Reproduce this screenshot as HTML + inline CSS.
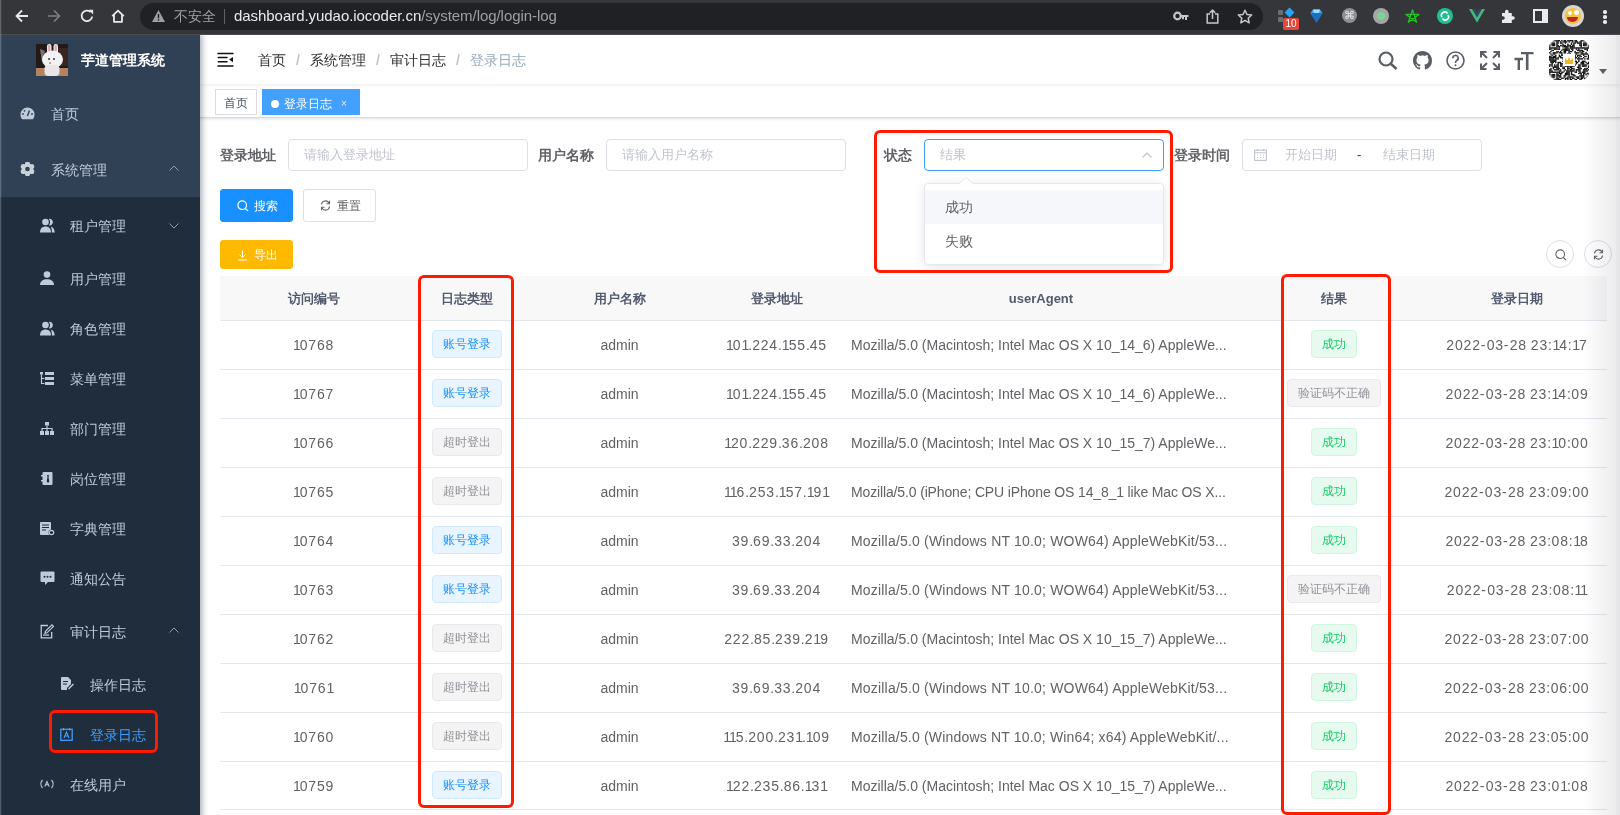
<!DOCTYPE html>
<html><head><meta charset="utf-8"><title>登录日志</title>
<style>
*{box-sizing:border-box;margin:0;padding:0}
html,body{width:1620px;height:815px;overflow:hidden}
body{position:relative;font-family:"Liberation Sans",sans-serif;background:#fff;color:#606266}
.a{position:absolute}
/* chrome */
#chrome{position:absolute;left:0;top:0;width:1620px;height:35px;background:#35363a;border-bottom:1px solid #4a4b4f;z-index:4}
#omni{position:absolute;left:140px;top:3px;width:1123px;height:27px;border-radius:14px;background:#202124}
.url{position:absolute;left:234px;top:7px;font-size:15px;line-height:18px;color:#e8eaed;white-space:nowrap;letter-spacing:-0.05px}
.url span{color:#9aa0a6}
.insecure{position:absolute;left:174px;top:7px;font-size:14px;line-height:18px;color:#9aa0a6}
.sep{position:absolute;left:224px;top:9px;width:1px;height:15px;background:#5f6368}
/* sidebar */
#side{position:absolute;left:0;top:34px;width:200px;height:820px;background:#304156;box-shadow:2px 0 6px rgba(0,21,41,.35);z-index:2}
#sub{position:absolute;left:0;top:163px;width:200px;height:660px;background:#1f2d3d}
.title{position:absolute;left:81px;top:16px;font-size:14px;font-weight:bold;color:#fff;line-height:20px;white-space:nowrap}
.mi{position:absolute;left:0;width:200px;height:20px;font-size:14px;line-height:20px;color:#bfcbd9;white-space:nowrap}
.mi .t{position:absolute;top:0}
.mi svg{position:absolute}
.chev{position:absolute;left:169px;width:10px;height:6px}
/* main */
#nav{position:absolute;left:200px;top:34px;width:1420px;height:50px;background:#fff;box-shadow:0 1px 4px rgba(0,21,41,.08);z-index:1}
.bc{position:absolute;top:18px;font-size:14px;line-height:16px;color:#303133;white-space:nowrap}
.bcs{position:absolute;top:18px;font-size:14px;line-height:16px;color:#c0c4cc;font-weight:bold}
#tags{position:absolute;left:200px;top:84px;width:1420px;height:34px;background:#fff;border-bottom:1px solid #d8dce5;box-shadow:0 1px 3px 0 rgba(0,0,0,.12),0 0 3px 0 rgba(0,0,0,.04)}
.tab{position:absolute;top:5px;height:26px;line-height:26px;font-size:12px;border:1px solid #d8dce5;color:#495060;background:#fff;padding:0 8px;white-space:nowrap}
.tab.act{background:#42a0ff;border-color:#42a0ff;color:#fff}
.lbl{position:absolute;top:139px;height:32px;line-height:32px;font-size:14px;font-weight:bold;color:#606266;white-space:nowrap}
.inp{position:absolute;top:139px;height:32px;width:240px;border:1px solid #dcdfe6;border-radius:4px;background:#fff;font-size:13px;line-height:30px;color:#c0c4cc;white-space:nowrap}
.inp .ph{position:absolute;left:15px;top:0}
.btn{position:absolute;height:32px;width:73px;border-radius:3px;font-size:12px;line-height:30px;white-space:nowrap}
.thead{position:absolute;left:220px;top:276px;width:1387px;height:45px;background:#f8f8f9;border-bottom:1px solid #e3e8ee}
.th{position:absolute;top:276px;height:43px;line-height:45px;text-align:center;font-size:13px;font-weight:bold;color:#515a6e;white-space:nowrap}
.rowline{position:absolute;left:220px;width:1387px;height:1px;background:#e3e8ee}
.td{position:absolute;height:48px;line-height:50px;text-align:center;font-size:14px;color:#606266;white-space:nowrap}
.ua{text-align:left;padding-left:10px}
.tag{position:absolute;height:28px;line-height:26px;padding:0;text-align:center;font-size:12px;border:1px solid;border-radius:4px;white-space:nowrap}
.tp{background:#e8f4ff;border-color:#d1e9ff;color:#1890ff}
.ti{background:#f4f4f5;border-color:#e9e9eb;color:#909399}
.ts{background:#e7faf0;border-color:#d0f5e0;color:#13ce66}
.redbox{position:absolute;z-index:5;border:3px solid #ff1a00;border-radius:6px}



</style></head><body><div id="wrap" style="position:absolute;left:0;top:0;width:1620px;height:815px;overflow:hidden;will-change:transform">
<div id="chrome">
  <svg class="a" style="left:14px;top:8px" width="16" height="16" viewBox="0 0 16 16"><path d="M14 8H3M8 2.5L2.5 8 8 13.5" stroke="#e8eaed" stroke-width="1.8" fill="none"/></svg>
  <svg class="a" style="left:46px;top:8px" width="16" height="16" viewBox="0 0 16 16"><path d="M2 8h11M8 2.5L13.5 8 8 13.5" stroke="#7c7f84" stroke-width="1.6" fill="none"/></svg>
  <svg class="a" style="left:79px;top:8px" width="16" height="16" viewBox="0 0 16 16"><path d="M13.2 8.5A5.3 5.3 0 1 1 11.6 4" stroke="#e8eaed" stroke-width="1.8" fill="none"/><path d="M9.5 1.8h4.6v4.6z" fill="#e8eaed"/></svg>
  <svg class="a" style="left:110px;top:8px" width="16" height="16" viewBox="0 0 16 16"><path d="M2.2 8.2L8 2.6l5.8 5.6M4 7v6.8h8V7" stroke="#e8eaed" stroke-width="1.8" fill="none" stroke-linejoin="round"/></svg>
  <div id="omni"></div>
  <svg class="a" style="left:151px;top:9px" width="15" height="14" viewBox="0 0 15 14"><path d="M7.5 1L14 13H1z" fill="#9aa0a6"/><rect x="6.8" y="5" width="1.4" height="4.3" fill="#202124"/><rect x="6.8" y="10.2" width="1.4" height="1.4" fill="#202124"/></svg>
  <div class="insecure">不安全</div>
  <div class="sep"></div>
  <div class="url">dashboard.yudao.iocoder.cn<span>/system/log/login-log</span></div>
  <svg class="a" style="left:1173px;top:10px" width="16" height="12" viewBox="0 0 16 12"><circle cx="4.5" cy="6" r="3.3" stroke="#c4c7cc" stroke-width="2.2" fill="none"/><path d="M7.5 5h8v2h-1.5v3h-2v-3h-1v2.2h-2V7H7.5z" fill="#c4c7cc"/></svg>
  <svg class="a" style="left:1206px;top:9px" width="13" height="15" viewBox="0 0 13 15"><path d="M4 5H1.2v9h10.6V5H9M6.5 10V1.2M3.8 3.8L6.5 1.1 9.2 3.8" stroke="#c4c7cc" stroke-width="1.5" fill="none"/></svg>
  <svg class="a" style="left:1237px;top:9px" width="16" height="15" viewBox="0 0 16 15"><path d="M8 1.2l2 4.3 4.7.5-3.5 3.2 1 4.6L8 11.4l-4.2 2.4 1-4.6L1.3 6l4.7-.5z" stroke="#c4c7cc" stroke-width="1.5" fill="none" stroke-linejoin="round"/></svg>
  <!-- extensions -->
  <div class="a" style="left:1278px;top:10px;width:5px;height:5px;background:#6b6e73;border-radius:1px"></div>
  <div class="a" style="left:1278px;top:17px;width:5px;height:5px;background:#6b6e73;border-radius:1px"></div>
  <div class="a" style="left:1286px;top:9px;width:7px;height:7px;background:#1ea7fd;transform:rotate(45deg)"></div>
  <div class="a" style="left:1283px;top:18px;width:16px;height:12px;background:#e8453c;border-radius:2px;color:#fff;font-size:10px;line-height:12px;text-align:center">10</div>
  <svg class="a" style="left:1310px;top:9px" width="13" height="14" viewBox="0 0 13 14"><path d="M3 0.5h7l2.5 3.5L6.5 13.5 0.5 4z" fill="#3aa7f0"/><path d="M0.5 4h12L6.5 13.5z" fill="#1b6fc4"/><path d="M3 0.5h7l-1 3.5H4z" fill="#9be0ff"/></svg>
  <div class="a" style="left:1342px;top:8px;width:15px;height:15px;border-radius:50%;background:#8d8f93;color:#e8e8e8;font-size:11px;line-height:15px;text-align:center">⌘</div>
  <div class="a" style="left:1373px;top:8px;width:16px;height:16px;border-radius:50%;background:#a3a5a8"></div>
  <div class="a" style="left:1377px;top:12px;width:8px;height:8px;border-radius:50%;background:#7fd28c"></div>
  <svg class="a" style="left:1405px;top:9px" width="15" height="15" viewBox="0 0 15 15"><path d="M7.5 0.8L11.6 13.2 0.9 5.4H14.1L3.4 13.2Z" stroke="#1ec31e" stroke-width="1.3" fill="none" stroke-linejoin="round"/></svg>
  <div class="a" style="left:1437px;top:8px;width:16px;height:16px;border-radius:50%;background:#1fbf8f"></div>
  <svg class="a" style="left:1440px;top:11px" width="10" height="10" viewBox="0 0 10 10"><path d="M2 6A3 3 0 0 1 7.5 2.5M8 4A3 3 0 0 1 2.5 7.5" stroke="#fff" stroke-width="1.6" fill="none"/></svg>
  <svg class="a" style="left:1469px;top:9px" width="16" height="14" viewBox="0 0 16 14"><path d="M0 0h3.2L8 8.3 12.8 0H16L8 13.8z" fill="#41b883"/><path d="M3.2 0h2.9L8 3.3 9.9 0h2.9L8 8.3z" fill="#35495e"/></svg>
  <svg class="a" style="left:1501px;top:9px" width="15" height="14" viewBox="0 0 15 14"><path d="M1 4h3V2.5a1.8 1.8 0 0 1 3.6 0V4h3.2v3.2h1.2a1.8 1.8 0 0 1 0 3.6h-1.2V14H1v-3.2h1a1.8 1.8 0 0 0 0-3.6H1z" fill="#e8eaed"/></svg>
  <svg class="a" style="left:1533px;top:9px" width="15" height="14" viewBox="0 0 15 14"><rect x="1" y="1" width="13" height="12" stroke="#e8eaed" stroke-width="2" fill="none"/><rect x="9" y="1" width="5" height="12" fill="#e8eaed"/></svg>
  <div class="a" style="left:1562px;top:5px;width:22px;height:22px;border-radius:50%;background:#d6d6d6"></div>
  <div class="a" style="left:1565px;top:8px;width:16px;height:16px;border-radius:50%;background:#f6c33b"></div>
  <div class="a" style="left:1567px;top:17px;width:11px;height:5px;border-radius:0 0 6px 6px;background:#c0262d"></div><div class="a" style="left:1568px;top:11px;width:4px;height:4px;border-radius:50%;background:#fff"></div><div class="a" style="left:1574px;top:10px;width:5px;height:5px;border-radius:50%;background:#fff"></div>
  <div class="a" style="left:1603px;top:10px;width:3.5px;height:3.5px;border-radius:50%;background:#e8eaed"></div>
  <div class="a" style="left:1603px;top:15px;width:3.5px;height:3.5px;border-radius:50%;background:#e8eaed"></div>
  <div class="a" style="left:1603px;top:20px;width:3.5px;height:3.5px;border-radius:50%;background:#e8eaed"></div>
</div>

<div id="side">
  <div id="sub"></div>
  <!-- logo -->
  <svg class="a" style="left:36px;top:10px" width="32" height="32" viewBox="0 0 32 32"><rect width="32" height="32" fill="#231a18"/><rect x="22" y="4" width="10" height="18" fill="#3a2620"/><path d="M4 5l5 2-2 5 3 4-4 2z" fill="#7b7472"/><rect y="24" width="32" height="8" fill="#b4835f"/><rect x="11" y="0" width="4.5" height="10" rx="2" fill="#eceaea"/><rect x="12.2" y="1" width="2" height="7" fill="#e7a1b1"/><rect x="17.5" y="0" width="4.5" height="10" rx="2" fill="#eceaea"/><rect x="18.7" y="1" width="2" height="7" fill="#e7a1b1"/><ellipse cx="16.5" cy="15.5" rx="10.5" ry="9" fill="#f2f2f4"/><rect x="8.5" y="21" width="15" height="11" rx="4" fill="#e9e5e8"/><circle cx="13" cy="15" r="1.1" fill="#3b4a66"/><circle cx="18" cy="15" r="1.1" fill="#3b4a66"/><circle cx="14" cy="19" r="0.9" fill="#c8764a"/></svg>
  <div class="title">芋道管理系统</div>

  <div class="mi" style="top:70px"><svg style="left:20px;top:3px" width="15" height="13" viewBox="0 0 15 13"><path d="M7.5 0.5A7 7 0 0 0 0.5 7.5c0 1.8.6 3.5 1.6 4.8h10.8a7 7 0 0 0 1.6-4.8A7 7 0 0 0 7.5 0.5z" fill="#bfcbd9"/><path d="M7.5 9L9.5 3.5" stroke="#304156" stroke-width="1.4"/><circle cx="3" cy="7" r="0.9" fill="#304156"/><circle cx="4.5" cy="3.8" r="0.9" fill="#304156"/><circle cx="12" cy="7" r="0.9" fill="#304156"/></svg><span class="t" style="left:51px">首页</span></div>
  <div class="mi" style="top:126px"><svg style="left:20px;top:2px" width="15" height="14" viewBox="0 0 15 14"><g fill="#c9d0d8"><circle cx="7.5" cy="7" r="5"/><circle cx="11.66" cy="9.40" r="2.6"/><circle cx="7.50" cy="11.80" r="2.6"/><circle cx="3.34" cy="9.40" r="2.6"/><circle cx="3.34" cy="4.60" r="2.6"/><circle cx="7.50" cy="2.20" r="2.6"/><circle cx="11.66" cy="4.60" r="2.6"/></g><circle cx="7.5" cy="7" r="2.3" fill="#304156"/></svg><span class="t" style="left:51px">系统管理</span><svg class="chev" style="top:5px" viewBox="0 0 10 6"><path d="M0.5 5.5L5 1l4.5 4.5" stroke="#909aa8" stroke-width="1" fill="none"/></svg></div>

  <div class="mi" style="top:182px"><svg style="left:40px;top:2px" width="15" height="15" viewBox="0 0 15 15"><path d="M8.8 0.9a3.3 3.3 0 1 1 0 6.4A4.6 4.6 0 0 0 8.8 0.9zM10.8 8.6c2.4.6 3.9 2.6 3.9 5.9h-2.8c0-2.6-.4-4.4-1.1-5.9z" fill="#bfcbd9"/><circle cx="5.5" cy="4" r="3.3" fill="#bfcbd9"/><path d="M0 14.5c0-4 2.2-6 5.5-6s5.5 2 5.5 6z" fill="#bfcbd9"/></svg><span class="t" style="left:70px">租户管理</span><svg class="chev" style="top:7px" viewBox="0 0 10 6"><path d="M0.5 0.5L5 5l4.5-4.5" stroke="#909aa8" stroke-width="1" fill="none"/></svg></div>
  <div class="mi" style="top:235px"><svg style="left:40px;top:2px" width="14" height="14" viewBox="0 0 14 14"><circle cx="7" cy="3.6" r="3.3" fill="#bfcbd9"/><path d="M0 14c0-4 3-5.8 7-5.8s7 1.8 7 5.8z" fill="#bfcbd9"/></svg><span class="t" style="left:70px">用户管理</span></div>
  <div class="mi" style="top:285px"><svg style="left:40px;top:2px" width="15" height="15" viewBox="0 0 15 15"><path d="M8.8 0.9a3.3 3.3 0 1 1 0 6.4A4.6 4.6 0 0 0 8.8 0.9zM10.8 8.6c2.4.6 3.9 2.6 3.9 5.9h-2.8c0-2.6-.4-4.4-1.1-5.9z" fill="#bfcbd9"/><circle cx="5.5" cy="4" r="3.3" fill="#bfcbd9"/><path d="M0 14.5c0-4 2.2-6 5.5-6s5.5 2 5.5 6z" fill="#bfcbd9"/></svg><span class="t" style="left:70px">角色管理</span></div>
  <div class="mi" style="top:335px"><svg style="left:40px;top:3px" width="14" height="14" viewBox="0 0 14 14"><rect x="0" y="0" width="3" height="2.5" fill="#bfcbd9"/><path d="M1.5 2.5v9h3M1.5 6.5h3" stroke="#bfcbd9" stroke-width="1.2" fill="none"/><rect x="5" y="0" width="9" height="3" fill="#bfcbd9"/><rect x="5" y="5" width="9" height="3" fill="#bfcbd9"/><rect x="5" y="10" width="9" height="3" fill="#bfcbd9"/></svg><span class="t" style="left:70px">菜单管理</span></div>
  <div class="mi" style="top:385px"><svg style="left:40px;top:3px" width="14" height="14" viewBox="0 0 14 14"><rect x="5" y="0" width="4" height="3.5" fill="#bfcbd9"/><path d="M7 3.5v3M2 9V6.5h10V9M7 6.5V9" stroke="#bfcbd9" stroke-width="1.2" fill="none"/><rect x="0" y="9" width="4" height="4" fill="#bfcbd9"/><rect x="5" y="9" width="4" height="4" fill="#bfcbd9"/><rect x="10" y="9" width="4" height="4" fill="#bfcbd9"/></svg><span class="t" style="left:70px">部门管理</span></div>
  <div class="mi" style="top:435px"><svg style="left:41px;top:3px" width="12" height="14" viewBox="0 0 12 14"><rect x="1.5" y="0" width="10" height="13" rx="1" fill="#bfcbd9"/><rect x="0" y="3" width="3" height="1.5" fill="#bfcbd9"/><rect x="0" y="8" width="3" height="1.5" fill="#bfcbd9"/><path d="M6 3h2l-.5 2 .8 4.5L7 11 5.7 9.5l.8-4.5z" fill="#1f2d3d"/></svg><span class="t" style="left:70px">岗位管理</span></div>
  <div class="mi" style="top:485px"><svg style="left:40px;top:3px" width="15" height="14" viewBox="0 0 15 14"><rect x="0" y="0" width="11" height="13" rx="1" fill="#bfcbd9"/><path d="M2 3h7M2 5.5h7M2 8h4" stroke="#1f2d3d" stroke-width="1"/><circle cx="11.5" cy="10.5" r="3" fill="#1f2d3d"/><circle cx="11.5" cy="10.5" r="2.2" stroke="#bfcbd9" stroke-width="1.2" fill="none"/></svg><span class="t" style="left:70px">字典管理</span></div>
  <div class="mi" style="top:535px"><svg style="left:40px;top:2px" width="15" height="15" viewBox="0 0 15 15"><path d="M1.5 0.5h12a1 1 0 0 1 1 1v8.5a1 1 0 0 1-1 1H8l-3 3v-3H1.5a1 1 0 0 1-1-1V1.5a1 1 0 0 1 1-1z" fill="#bfcbd9"/><circle cx="4.5" cy="5.8" r="1" fill="#1f2d3d"/><circle cx="7.5" cy="5.8" r="1" fill="#1f2d3d"/><circle cx="10.5" cy="5.8" r="1" fill="#1f2d3d"/></svg><span class="t" style="left:70px">通知公告</span></div>
  <div class="mi" style="top:588px"><svg style="left:40px;top:2px" width="14" height="15" viewBox="0 0 14 15"><path d="M8 1.5H1.2v12.3h10.5V8" stroke="#bfcbd9" stroke-width="1.3" fill="none"/><path d="M12 0.8l1.5 1.5-6.5 6.5-2 .5.5-2z" stroke="#bfcbd9" stroke-width="1.2" fill="none"/><path d="M3 11h6" stroke="#bfcbd9" stroke-width="1.2"/></svg><span class="t" style="left:70px">审计日志</span><svg class="chev" style="top:5px" viewBox="0 0 10 6"><path d="M0.5 5.5L5 1l4.5 4.5" stroke="#909aa8" stroke-width="1" fill="none"/></svg></div>
  <div class="mi" style="top:641px"><svg style="left:60px;top:2px" width="15" height="14" viewBox="0 0 15 14"><path d="M1 1a1 1 0 0 1 1-1h6l3 3v4l-4 4v2H2a1 1 0 0 1-1-1z" fill="#bfcbd9"/><path d="M3 4.5h5M3 7h4" stroke="#1f2d3d" stroke-width="1.2"/><path d="M8.5 12l5-5" stroke="#bfcbd9" stroke-width="1.5"/></svg><span class="t" style="left:90px">操作日志</span></div>
  <div class="mi" style="top:691px;color:#409eff"><svg style="left:60px;top:3px" width="13" height="13" viewBox="0 0 13 13"><rect x="0.8" y="1.3" width="11.4" height="11" stroke="#409eff" stroke-width="1.3" fill="none"/><path d="M3.5 0v2.5M9.5 0v2.5M4 10l2.5-6 2.5 6M4.8 8h3.4" stroke="#409eff" stroke-width="1.2" fill="none"/></svg><span class="t" style="left:90px">登录日志</span></div>
  <div class="mi" style="top:741px"><svg style="left:40px;top:4px" width="14" height="10" viewBox="0 0 14 10"><path d="M2.5 1A6 6 0 0 0 2.5 9M11.5 1a6 6 0 0 1 0 8" stroke="#bfcbd9" stroke-width="1.2" fill="none"/><path d="M4.8 7.5l2.2-5 2.2 5M5.6 5.8h2.8" stroke="#bfcbd9" stroke-width="1.1" fill="none"/></svg><span class="t" style="left:70px">在线用户</span></div>
</div>

<div id="nav">
  <svg class="a" style="left:17px;top:52px;top:18px" width="17" height="16" viewBox="0 0 17 16"><path d="M1 1.5h15M1.3 5.5h8.7M1.3 9.7h8.7M1 14h15" stroke="#111" stroke-width="1.5" stroke-linecap="round"/><path d="M12.2 7.6L16 5v5.2z" fill="#111"/></svg>
  <div class="bc" style="left:58px">首页</div>
  <div class="bcs" style="left:96px">/</div>
  <div class="bc" style="left:110px">系统管理</div>
  <div class="bcs" style="left:176px">/</div>
  <div class="bc" style="left:190px">审计日志</div>
  <div class="bcs" style="left:256px">/</div>
  <div class="bc" style="left:270px;color:#97a8be">登录日志</div>
  <svg class="a" style="left:1178px;top:17px" width="20" height="19" viewBox="0 0 20 19"><circle cx="8" cy="8" r="6.5" stroke="#5a5e66" stroke-width="2.2" fill="none"/><path d="M12.8 12.8L18.5 18" stroke="#5a5e66" stroke-width="2.6"/></svg>
  <svg class="a" style="left:1213px;top:17px" width="19" height="19" viewBox="0 0 16 16"><path fill="#5a5e66" d="M8 0C3.58 0 0 3.58 0 8c0 3.54 2.29 6.53 5.47 7.59.4.07.55-.17.55-.38 0-.19-.01-.82-.01-1.49-2.01.37-2.53-.49-2.69-.94-.09-.23-.48-.94-.82-1.13-.28-.15-.68-.52-.01-.53.63-.01 1.08.58 1.23.82.72 1.21 1.87.87 2.33.66.07-.52.28-.87.51-1.07-1.78-.2-3.64-.89-3.64-3.95 0-.87.31-1.59.82-2.15-.08-.2-.36-1.02.08-2.12 0 0 .67-.21 2.2.82.64-.18 1.32-.27 2-.27.68 0 1.36.09 2 .27 1.53-1.04 2.2-.82 2.2-.82.44 1.1.16 1.92.08 2.12.51.56.82 1.27.82 2.15 0 3.07-1.87 3.75-3.65 3.95.29.25.54.73.54 1.48 0 1.07-.01 1.93-.01 2.2 0 .21.15.46.55.38A8.013 8.013 0 0016 8c0-4.42-3.58-8-8-8z"/></svg>
  <svg class="a" style="left:1246px;top:17px" width="19" height="19" viewBox="0 0 19 19"><circle cx="9.5" cy="9.5" r="8.5" stroke="#5a5e66" stroke-width="1.6" fill="none"/><path d="M6.8 7.2a2.7 2.7 0 1 1 3.8 2.4c-.8.4-1.1.9-1.1 1.8v.6" stroke="#5a5e66" stroke-width="1.6" fill="none"/><circle cx="9.5" cy="14.3" r="1" fill="#5a5e66"/></svg>
  <svg class="a" style="left:1280px;top:17px" width="20" height="19" viewBox="0 0 20 19"><path d="M1 6.5V1h5.5M1 1l6 6M19 6.5V1h-5.5M19 1l-6 6M1 12.5V18h5.5M1 18l6-6M19 12.5V18h-5.5M19 18l-6-6" stroke="#5a5e66" stroke-width="2" fill="none"/></svg>
  <svg class="a" style="left:1314px;top:18px" width="20" height="18" viewBox="0 0 20 18"><path d="M7 1h12.5M13.2 1v17" stroke="#5a5e66" stroke-width="2.6"/><path d="M0.5 7h8.5M4.8 7v11" stroke="#5a5e66" stroke-width="2.4"/></svg>
  <div class="a" style="left:1349px;top:6px;width:40px;height:40px;border-radius:8px;overflow:hidden"><svg width="40" height="40" viewBox="0 0 40 40"><rect width="40" height="40" fill="#fff"/><g fill="#111"><rect x="0.00" y="0.00" width="1.41" height="1.41"/><rect x="1.21" y="0.00" width="1.41" height="1.41"/><rect x="2.42" y="0.00" width="1.41" height="1.41"/><rect x="3.64" y="0.00" width="1.41" height="1.41"/><rect x="4.85" y="0.00" width="1.41" height="1.41"/><rect x="6.06" y="0.00" width="1.41" height="1.41"/><rect x="7.27" y="0.00" width="1.41" height="1.41"/><rect x="8.48" y="0.00" width="1.41" height="1.41"/><rect x="9.70" y="0.00" width="1.41" height="1.41"/><rect x="12.12" y="0.00" width="1.41" height="1.41"/><rect x="14.55" y="0.00" width="1.41" height="1.41"/><rect x="15.76" y="0.00" width="1.41" height="1.41"/><rect x="18.18" y="0.00" width="1.41" height="1.41"/><rect x="19.39" y="0.00" width="1.41" height="1.41"/><rect x="20.61" y="0.00" width="1.41" height="1.41"/><rect x="21.82" y="0.00" width="1.41" height="1.41"/><rect x="23.03" y="0.00" width="1.41" height="1.41"/><rect x="25.45" y="0.00" width="1.41" height="1.41"/><rect x="26.67" y="0.00" width="1.41" height="1.41"/><rect x="31.52" y="0.00" width="1.41" height="1.41"/><rect x="32.73" y="0.00" width="1.41" height="1.41"/><rect x="33.94" y="0.00" width="1.41" height="1.41"/><rect x="35.15" y="0.00" width="1.41" height="1.41"/><rect x="36.36" y="0.00" width="1.41" height="1.41"/><rect x="37.58" y="0.00" width="1.41" height="1.41"/><rect x="38.79" y="0.00" width="1.41" height="1.41"/><rect x="0.00" y="1.21" width="1.41" height="1.41"/><rect x="7.27" y="1.21" width="1.41" height="1.41"/><rect x="8.48" y="1.21" width="1.41" height="1.41"/><rect x="10.91" y="1.21" width="1.41" height="1.41"/><rect x="13.33" y="1.21" width="1.41" height="1.41"/><rect x="14.55" y="1.21" width="1.41" height="1.41"/><rect x="15.76" y="1.21" width="1.41" height="1.41"/><rect x="16.97" y="1.21" width="1.41" height="1.41"/><rect x="19.39" y="1.21" width="1.41" height="1.41"/><rect x="23.03" y="1.21" width="1.41" height="1.41"/><rect x="25.45" y="1.21" width="1.41" height="1.41"/><rect x="26.67" y="1.21" width="1.41" height="1.41"/><rect x="27.88" y="1.21" width="1.41" height="1.41"/><rect x="30.30" y="1.21" width="1.41" height="1.41"/><rect x="31.52" y="1.21" width="1.41" height="1.41"/><rect x="38.79" y="1.21" width="1.41" height="1.41"/><rect x="0.00" y="2.42" width="1.41" height="1.41"/><rect x="2.42" y="2.42" width="1.41" height="1.41"/><rect x="3.64" y="2.42" width="1.41" height="1.41"/><rect x="4.85" y="2.42" width="1.41" height="1.41"/><rect x="7.27" y="2.42" width="1.41" height="1.41"/><rect x="8.48" y="2.42" width="1.41" height="1.41"/><rect x="10.91" y="2.42" width="1.41" height="1.41"/><rect x="12.12" y="2.42" width="1.41" height="1.41"/><rect x="15.76" y="2.42" width="1.41" height="1.41"/><rect x="21.82" y="2.42" width="1.41" height="1.41"/><rect x="24.24" y="2.42" width="1.41" height="1.41"/><rect x="25.45" y="2.42" width="1.41" height="1.41"/><rect x="27.88" y="2.42" width="1.41" height="1.41"/><rect x="29.09" y="2.42" width="1.41" height="1.41"/><rect x="30.30" y="2.42" width="1.41" height="1.41"/><rect x="31.52" y="2.42" width="1.41" height="1.41"/><rect x="33.94" y="2.42" width="1.41" height="1.41"/><rect x="35.15" y="2.42" width="1.41" height="1.41"/><rect x="36.36" y="2.42" width="1.41" height="1.41"/><rect x="38.79" y="2.42" width="1.41" height="1.41"/><rect x="0.00" y="3.64" width="1.41" height="1.41"/><rect x="2.42" y="3.64" width="1.41" height="1.41"/><rect x="3.64" y="3.64" width="1.41" height="1.41"/><rect x="4.85" y="3.64" width="1.41" height="1.41"/><rect x="7.27" y="3.64" width="1.41" height="1.41"/><rect x="13.33" y="3.64" width="1.41" height="1.41"/><rect x="18.18" y="3.64" width="1.41" height="1.41"/><rect x="21.82" y="3.64" width="1.41" height="1.41"/><rect x="24.24" y="3.64" width="1.41" height="1.41"/><rect x="30.30" y="3.64" width="1.41" height="1.41"/><rect x="31.52" y="3.64" width="1.41" height="1.41"/><rect x="33.94" y="3.64" width="1.41" height="1.41"/><rect x="35.15" y="3.64" width="1.41" height="1.41"/><rect x="36.36" y="3.64" width="1.41" height="1.41"/><rect x="38.79" y="3.64" width="1.41" height="1.41"/><rect x="0.00" y="4.85" width="1.41" height="1.41"/><rect x="2.42" y="4.85" width="1.41" height="1.41"/><rect x="3.64" y="4.85" width="1.41" height="1.41"/><rect x="4.85" y="4.85" width="1.41" height="1.41"/><rect x="7.27" y="4.85" width="1.41" height="1.41"/><rect x="8.48" y="4.85" width="1.41" height="1.41"/><rect x="10.91" y="4.85" width="1.41" height="1.41"/><rect x="12.12" y="4.85" width="1.41" height="1.41"/><rect x="13.33" y="4.85" width="1.41" height="1.41"/><rect x="14.55" y="4.85" width="1.41" height="1.41"/><rect x="15.76" y="4.85" width="1.41" height="1.41"/><rect x="18.18" y="4.85" width="1.41" height="1.41"/><rect x="19.39" y="4.85" width="1.41" height="1.41"/><rect x="20.61" y="4.85" width="1.41" height="1.41"/><rect x="23.03" y="4.85" width="1.41" height="1.41"/><rect x="24.24" y="4.85" width="1.41" height="1.41"/><rect x="30.30" y="4.85" width="1.41" height="1.41"/><rect x="31.52" y="4.85" width="1.41" height="1.41"/><rect x="33.94" y="4.85" width="1.41" height="1.41"/><rect x="35.15" y="4.85" width="1.41" height="1.41"/><rect x="36.36" y="4.85" width="1.41" height="1.41"/><rect x="38.79" y="4.85" width="1.41" height="1.41"/><rect x="0.00" y="6.06" width="1.41" height="1.41"/><rect x="7.27" y="6.06" width="1.41" height="1.41"/><rect x="8.48" y="6.06" width="1.41" height="1.41"/><rect x="9.70" y="6.06" width="1.41" height="1.41"/><rect x="13.33" y="6.06" width="1.41" height="1.41"/><rect x="14.55" y="6.06" width="1.41" height="1.41"/><rect x="15.76" y="6.06" width="1.41" height="1.41"/><rect x="16.97" y="6.06" width="1.41" height="1.41"/><rect x="18.18" y="6.06" width="1.41" height="1.41"/><rect x="20.61" y="6.06" width="1.41" height="1.41"/><rect x="21.82" y="6.06" width="1.41" height="1.41"/><rect x="23.03" y="6.06" width="1.41" height="1.41"/><rect x="24.24" y="6.06" width="1.41" height="1.41"/><rect x="31.52" y="6.06" width="1.41" height="1.41"/><rect x="38.79" y="6.06" width="1.41" height="1.41"/><rect x="0.00" y="7.27" width="1.41" height="1.41"/><rect x="1.21" y="7.27" width="1.41" height="1.41"/><rect x="2.42" y="7.27" width="1.41" height="1.41"/><rect x="3.64" y="7.27" width="1.41" height="1.41"/><rect x="4.85" y="7.27" width="1.41" height="1.41"/><rect x="6.06" y="7.27" width="1.41" height="1.41"/><rect x="7.27" y="7.27" width="1.41" height="1.41"/><rect x="9.70" y="7.27" width="1.41" height="1.41"/><rect x="15.76" y="7.27" width="1.41" height="1.41"/><rect x="16.97" y="7.27" width="1.41" height="1.41"/><rect x="18.18" y="7.27" width="1.41" height="1.41"/><rect x="20.61" y="7.27" width="1.41" height="1.41"/><rect x="21.82" y="7.27" width="1.41" height="1.41"/><rect x="23.03" y="7.27" width="1.41" height="1.41"/><rect x="24.24" y="7.27" width="1.41" height="1.41"/><rect x="25.45" y="7.27" width="1.41" height="1.41"/><rect x="26.67" y="7.27" width="1.41" height="1.41"/><rect x="27.88" y="7.27" width="1.41" height="1.41"/><rect x="29.09" y="7.27" width="1.41" height="1.41"/><rect x="30.30" y="7.27" width="1.41" height="1.41"/><rect x="31.52" y="7.27" width="1.41" height="1.41"/><rect x="32.73" y="7.27" width="1.41" height="1.41"/><rect x="33.94" y="7.27" width="1.41" height="1.41"/><rect x="35.15" y="7.27" width="1.41" height="1.41"/><rect x="36.36" y="7.27" width="1.41" height="1.41"/><rect x="37.58" y="7.27" width="1.41" height="1.41"/><rect x="38.79" y="7.27" width="1.41" height="1.41"/><rect x="0.00" y="8.48" width="1.41" height="1.41"/><rect x="1.21" y="8.48" width="1.41" height="1.41"/><rect x="4.85" y="8.48" width="1.41" height="1.41"/><rect x="6.06" y="8.48" width="1.41" height="1.41"/><rect x="7.27" y="8.48" width="1.41" height="1.41"/><rect x="8.48" y="8.48" width="1.41" height="1.41"/><rect x="9.70" y="8.48" width="1.41" height="1.41"/><rect x="13.33" y="8.48" width="1.41" height="1.41"/><rect x="14.55" y="8.48" width="1.41" height="1.41"/><rect x="15.76" y="8.48" width="1.41" height="1.41"/><rect x="16.97" y="8.48" width="1.41" height="1.41"/><rect x="18.18" y="8.48" width="1.41" height="1.41"/><rect x="19.39" y="8.48" width="1.41" height="1.41"/><rect x="21.82" y="8.48" width="1.41" height="1.41"/><rect x="23.03" y="8.48" width="1.41" height="1.41"/><rect x="26.67" y="8.48" width="1.41" height="1.41"/><rect x="29.09" y="8.48" width="1.41" height="1.41"/><rect x="35.15" y="8.48" width="1.41" height="1.41"/><rect x="36.36" y="8.48" width="1.41" height="1.41"/><rect x="37.58" y="8.48" width="1.41" height="1.41"/><rect x="2.42" y="9.70" width="1.41" height="1.41"/><rect x="3.64" y="9.70" width="1.41" height="1.41"/><rect x="12.12" y="9.70" width="1.41" height="1.41"/><rect x="14.55" y="9.70" width="1.41" height="1.41"/><rect x="15.76" y="9.70" width="1.41" height="1.41"/><rect x="16.97" y="9.70" width="1.41" height="1.41"/><rect x="18.18" y="9.70" width="1.41" height="1.41"/><rect x="19.39" y="9.70" width="1.41" height="1.41"/><rect x="23.03" y="9.70" width="1.41" height="1.41"/><rect x="27.88" y="9.70" width="1.41" height="1.41"/><rect x="29.09" y="9.70" width="1.41" height="1.41"/><rect x="30.30" y="9.70" width="1.41" height="1.41"/><rect x="31.52" y="9.70" width="1.41" height="1.41"/><rect x="32.73" y="9.70" width="1.41" height="1.41"/><rect x="37.58" y="9.70" width="1.41" height="1.41"/><rect x="1.21" y="10.91" width="1.41" height="1.41"/><rect x="7.27" y="10.91" width="1.41" height="1.41"/><rect x="8.48" y="10.91" width="1.41" height="1.41"/><rect x="10.91" y="10.91" width="1.41" height="1.41"/><rect x="14.55" y="10.91" width="1.41" height="1.41"/><rect x="15.76" y="10.91" width="1.41" height="1.41"/><rect x="19.39" y="10.91" width="1.41" height="1.41"/><rect x="20.61" y="10.91" width="1.41" height="1.41"/><rect x="21.82" y="10.91" width="1.41" height="1.41"/><rect x="25.45" y="10.91" width="1.41" height="1.41"/><rect x="30.30" y="10.91" width="1.41" height="1.41"/><rect x="32.73" y="10.91" width="1.41" height="1.41"/><rect x="33.94" y="10.91" width="1.41" height="1.41"/><rect x="0.00" y="12.12" width="1.41" height="1.41"/><rect x="3.64" y="12.12" width="1.41" height="1.41"/><rect x="4.85" y="12.12" width="1.41" height="1.41"/><rect x="6.06" y="12.12" width="1.41" height="1.41"/><rect x="7.27" y="12.12" width="1.41" height="1.41"/><rect x="9.70" y="12.12" width="1.41" height="1.41"/><rect x="10.91" y="12.12" width="1.41" height="1.41"/><rect x="12.12" y="12.12" width="1.41" height="1.41"/><rect x="14.55" y="12.12" width="1.41" height="1.41"/><rect x="15.76" y="12.12" width="1.41" height="1.41"/><rect x="19.39" y="12.12" width="1.41" height="1.41"/><rect x="25.45" y="12.12" width="1.41" height="1.41"/><rect x="26.67" y="12.12" width="1.41" height="1.41"/><rect x="27.88" y="12.12" width="1.41" height="1.41"/><rect x="29.09" y="12.12" width="1.41" height="1.41"/><rect x="31.52" y="12.12" width="1.41" height="1.41"/><rect x="32.73" y="12.12" width="1.41" height="1.41"/><rect x="36.36" y="12.12" width="1.41" height="1.41"/><rect x="1.21" y="13.33" width="1.41" height="1.41"/><rect x="3.64" y="13.33" width="1.41" height="1.41"/><rect x="4.85" y="13.33" width="1.41" height="1.41"/><rect x="12.12" y="13.33" width="1.41" height="1.41"/><rect x="18.18" y="13.33" width="1.41" height="1.41"/><rect x="20.61" y="13.33" width="1.41" height="1.41"/><rect x="26.67" y="13.33" width="1.41" height="1.41"/><rect x="31.52" y="13.33" width="1.41" height="1.41"/><rect x="32.73" y="13.33" width="1.41" height="1.41"/><rect x="33.94" y="13.33" width="1.41" height="1.41"/><rect x="35.15" y="13.33" width="1.41" height="1.41"/><rect x="36.36" y="13.33" width="1.41" height="1.41"/><rect x="37.58" y="13.33" width="1.41" height="1.41"/><rect x="2.42" y="14.55" width="1.41" height="1.41"/><rect x="6.06" y="14.55" width="1.41" height="1.41"/><rect x="9.70" y="14.55" width="1.41" height="1.41"/><rect x="12.12" y="14.55" width="1.41" height="1.41"/><rect x="13.33" y="14.55" width="1.41" height="1.41"/><rect x="16.97" y="14.55" width="1.41" height="1.41"/><rect x="18.18" y="14.55" width="1.41" height="1.41"/><rect x="20.61" y="14.55" width="1.41" height="1.41"/><rect x="21.82" y="14.55" width="1.41" height="1.41"/><rect x="23.03" y="14.55" width="1.41" height="1.41"/><rect x="25.45" y="14.55" width="1.41" height="1.41"/><rect x="27.88" y="14.55" width="1.41" height="1.41"/><rect x="29.09" y="14.55" width="1.41" height="1.41"/><rect x="30.30" y="14.55" width="1.41" height="1.41"/><rect x="33.94" y="14.55" width="1.41" height="1.41"/><rect x="38.79" y="14.55" width="1.41" height="1.41"/><rect x="0.00" y="15.76" width="1.41" height="1.41"/><rect x="1.21" y="15.76" width="1.41" height="1.41"/><rect x="3.64" y="15.76" width="1.41" height="1.41"/><rect x="4.85" y="15.76" width="1.41" height="1.41"/><rect x="6.06" y="15.76" width="1.41" height="1.41"/><rect x="9.70" y="15.76" width="1.41" height="1.41"/><rect x="10.91" y="15.76" width="1.41" height="1.41"/><rect x="15.76" y="15.76" width="1.41" height="1.41"/><rect x="16.97" y="15.76" width="1.41" height="1.41"/><rect x="19.39" y="15.76" width="1.41" height="1.41"/><rect x="20.61" y="15.76" width="1.41" height="1.41"/><rect x="25.45" y="15.76" width="1.41" height="1.41"/><rect x="27.88" y="15.76" width="1.41" height="1.41"/><rect x="30.30" y="15.76" width="1.41" height="1.41"/><rect x="31.52" y="15.76" width="1.41" height="1.41"/><rect x="35.15" y="15.76" width="1.41" height="1.41"/><rect x="36.36" y="15.76" width="1.41" height="1.41"/><rect x="38.79" y="15.76" width="1.41" height="1.41"/><rect x="0.00" y="16.97" width="1.41" height="1.41"/><rect x="1.21" y="16.97" width="1.41" height="1.41"/><rect x="2.42" y="16.97" width="1.41" height="1.41"/><rect x="3.64" y="16.97" width="1.41" height="1.41"/><rect x="4.85" y="16.97" width="1.41" height="1.41"/><rect x="6.06" y="16.97" width="1.41" height="1.41"/><rect x="8.48" y="16.97" width="1.41" height="1.41"/><rect x="10.91" y="16.97" width="1.41" height="1.41"/><rect x="12.12" y="16.97" width="1.41" height="1.41"/><rect x="13.33" y="16.97" width="1.41" height="1.41"/><rect x="14.55" y="16.97" width="1.41" height="1.41"/><rect x="15.76" y="16.97" width="1.41" height="1.41"/><rect x="19.39" y="16.97" width="1.41" height="1.41"/><rect x="20.61" y="16.97" width="1.41" height="1.41"/><rect x="23.03" y="16.97" width="1.41" height="1.41"/><rect x="25.45" y="16.97" width="1.41" height="1.41"/><rect x="26.67" y="16.97" width="1.41" height="1.41"/><rect x="29.09" y="16.97" width="1.41" height="1.41"/><rect x="33.94" y="16.97" width="1.41" height="1.41"/><rect x="38.79" y="16.97" width="1.41" height="1.41"/><rect x="0.00" y="18.18" width="1.41" height="1.41"/><rect x="1.21" y="18.18" width="1.41" height="1.41"/><rect x="2.42" y="18.18" width="1.41" height="1.41"/><rect x="3.64" y="18.18" width="1.41" height="1.41"/><rect x="6.06" y="18.18" width="1.41" height="1.41"/><rect x="7.27" y="18.18" width="1.41" height="1.41"/><rect x="8.48" y="18.18" width="1.41" height="1.41"/><rect x="13.33" y="18.18" width="1.41" height="1.41"/><rect x="14.55" y="18.18" width="1.41" height="1.41"/><rect x="15.76" y="18.18" width="1.41" height="1.41"/><rect x="16.97" y="18.18" width="1.41" height="1.41"/><rect x="18.18" y="18.18" width="1.41" height="1.41"/><rect x="19.39" y="18.18" width="1.41" height="1.41"/><rect x="20.61" y="18.18" width="1.41" height="1.41"/><rect x="25.45" y="18.18" width="1.41" height="1.41"/><rect x="27.88" y="18.18" width="1.41" height="1.41"/><rect x="29.09" y="18.18" width="1.41" height="1.41"/><rect x="30.30" y="18.18" width="1.41" height="1.41"/><rect x="31.52" y="18.18" width="1.41" height="1.41"/><rect x="32.73" y="18.18" width="1.41" height="1.41"/><rect x="35.15" y="18.18" width="1.41" height="1.41"/><rect x="37.58" y="18.18" width="1.41" height="1.41"/><rect x="38.79" y="18.18" width="1.41" height="1.41"/><rect x="0.00" y="19.39" width="1.41" height="1.41"/><rect x="1.21" y="19.39" width="1.41" height="1.41"/><rect x="2.42" y="19.39" width="1.41" height="1.41"/><rect x="3.64" y="19.39" width="1.41" height="1.41"/><rect x="4.85" y="19.39" width="1.41" height="1.41"/><rect x="6.06" y="19.39" width="1.41" height="1.41"/><rect x="14.55" y="19.39" width="1.41" height="1.41"/><rect x="15.76" y="19.39" width="1.41" height="1.41"/><rect x="18.18" y="19.39" width="1.41" height="1.41"/><rect x="21.82" y="19.39" width="1.41" height="1.41"/><rect x="29.09" y="19.39" width="1.41" height="1.41"/><rect x="1.21" y="20.61" width="1.41" height="1.41"/><rect x="2.42" y="20.61" width="1.41" height="1.41"/><rect x="3.64" y="20.61" width="1.41" height="1.41"/><rect x="4.85" y="20.61" width="1.41" height="1.41"/><rect x="6.06" y="20.61" width="1.41" height="1.41"/><rect x="13.33" y="20.61" width="1.41" height="1.41"/><rect x="14.55" y="20.61" width="1.41" height="1.41"/><rect x="21.82" y="20.61" width="1.41" height="1.41"/><rect x="24.24" y="20.61" width="1.41" height="1.41"/><rect x="25.45" y="20.61" width="1.41" height="1.41"/><rect x="26.67" y="20.61" width="1.41" height="1.41"/><rect x="29.09" y="20.61" width="1.41" height="1.41"/><rect x="32.73" y="20.61" width="1.41" height="1.41"/><rect x="33.94" y="20.61" width="1.41" height="1.41"/><rect x="35.15" y="20.61" width="1.41" height="1.41"/><rect x="1.21" y="21.82" width="1.41" height="1.41"/><rect x="2.42" y="21.82" width="1.41" height="1.41"/><rect x="3.64" y="21.82" width="1.41" height="1.41"/><rect x="6.06" y="21.82" width="1.41" height="1.41"/><rect x="8.48" y="21.82" width="1.41" height="1.41"/><rect x="9.70" y="21.82" width="1.41" height="1.41"/><rect x="10.91" y="21.82" width="1.41" height="1.41"/><rect x="15.76" y="21.82" width="1.41" height="1.41"/><rect x="18.18" y="21.82" width="1.41" height="1.41"/><rect x="19.39" y="21.82" width="1.41" height="1.41"/><rect x="20.61" y="21.82" width="1.41" height="1.41"/><rect x="23.03" y="21.82" width="1.41" height="1.41"/><rect x="26.67" y="21.82" width="1.41" height="1.41"/><rect x="27.88" y="21.82" width="1.41" height="1.41"/><rect x="31.52" y="21.82" width="1.41" height="1.41"/><rect x="32.73" y="21.82" width="1.41" height="1.41"/><rect x="33.94" y="21.82" width="1.41" height="1.41"/><rect x="36.36" y="21.82" width="1.41" height="1.41"/><rect x="38.79" y="21.82" width="1.41" height="1.41"/><rect x="2.42" y="23.03" width="1.41" height="1.41"/><rect x="8.48" y="23.03" width="1.41" height="1.41"/><rect x="10.91" y="23.03" width="1.41" height="1.41"/><rect x="12.12" y="23.03" width="1.41" height="1.41"/><rect x="13.33" y="23.03" width="1.41" height="1.41"/><rect x="14.55" y="23.03" width="1.41" height="1.41"/><rect x="15.76" y="23.03" width="1.41" height="1.41"/><rect x="16.97" y="23.03" width="1.41" height="1.41"/><rect x="18.18" y="23.03" width="1.41" height="1.41"/><rect x="19.39" y="23.03" width="1.41" height="1.41"/><rect x="20.61" y="23.03" width="1.41" height="1.41"/><rect x="23.03" y="23.03" width="1.41" height="1.41"/><rect x="26.67" y="23.03" width="1.41" height="1.41"/><rect x="31.52" y="23.03" width="1.41" height="1.41"/><rect x="32.73" y="23.03" width="1.41" height="1.41"/><rect x="33.94" y="23.03" width="1.41" height="1.41"/><rect x="37.58" y="23.03" width="1.41" height="1.41"/><rect x="38.79" y="23.03" width="1.41" height="1.41"/><rect x="0.00" y="24.24" width="1.41" height="1.41"/><rect x="1.21" y="24.24" width="1.41" height="1.41"/><rect x="2.42" y="24.24" width="1.41" height="1.41"/><rect x="4.85" y="24.24" width="1.41" height="1.41"/><rect x="7.27" y="24.24" width="1.41" height="1.41"/><rect x="8.48" y="24.24" width="1.41" height="1.41"/><rect x="10.91" y="24.24" width="1.41" height="1.41"/><rect x="12.12" y="24.24" width="1.41" height="1.41"/><rect x="23.03" y="24.24" width="1.41" height="1.41"/><rect x="25.45" y="24.24" width="1.41" height="1.41"/><rect x="29.09" y="24.24" width="1.41" height="1.41"/><rect x="30.30" y="24.24" width="1.41" height="1.41"/><rect x="32.73" y="24.24" width="1.41" height="1.41"/><rect x="33.94" y="24.24" width="1.41" height="1.41"/><rect x="35.15" y="24.24" width="1.41" height="1.41"/><rect x="36.36" y="24.24" width="1.41" height="1.41"/><rect x="0.00" y="25.45" width="1.41" height="1.41"/><rect x="2.42" y="25.45" width="1.41" height="1.41"/><rect x="4.85" y="25.45" width="1.41" height="1.41"/><rect x="6.06" y="25.45" width="1.41" height="1.41"/><rect x="7.27" y="25.45" width="1.41" height="1.41"/><rect x="8.48" y="25.45" width="1.41" height="1.41"/><rect x="10.91" y="25.45" width="1.41" height="1.41"/><rect x="12.12" y="25.45" width="1.41" height="1.41"/><rect x="15.76" y="25.45" width="1.41" height="1.41"/><rect x="16.97" y="25.45" width="1.41" height="1.41"/><rect x="18.18" y="25.45" width="1.41" height="1.41"/><rect x="19.39" y="25.45" width="1.41" height="1.41"/><rect x="20.61" y="25.45" width="1.41" height="1.41"/><rect x="21.82" y="25.45" width="1.41" height="1.41"/><rect x="23.03" y="25.45" width="1.41" height="1.41"/><rect x="24.24" y="25.45" width="1.41" height="1.41"/><rect x="29.09" y="25.45" width="1.41" height="1.41"/><rect x="30.30" y="25.45" width="1.41" height="1.41"/><rect x="32.73" y="25.45" width="1.41" height="1.41"/><rect x="33.94" y="25.45" width="1.41" height="1.41"/><rect x="35.15" y="25.45" width="1.41" height="1.41"/><rect x="36.36" y="25.45" width="1.41" height="1.41"/><rect x="38.79" y="25.45" width="1.41" height="1.41"/><rect x="3.64" y="26.67" width="1.41" height="1.41"/><rect x="4.85" y="26.67" width="1.41" height="1.41"/><rect x="6.06" y="26.67" width="1.41" height="1.41"/><rect x="7.27" y="26.67" width="1.41" height="1.41"/><rect x="8.48" y="26.67" width="1.41" height="1.41"/><rect x="13.33" y="26.67" width="1.41" height="1.41"/><rect x="14.55" y="26.67" width="1.41" height="1.41"/><rect x="18.18" y="26.67" width="1.41" height="1.41"/><rect x="20.61" y="26.67" width="1.41" height="1.41"/><rect x="21.82" y="26.67" width="1.41" height="1.41"/><rect x="27.88" y="26.67" width="1.41" height="1.41"/><rect x="29.09" y="26.67" width="1.41" height="1.41"/><rect x="30.30" y="26.67" width="1.41" height="1.41"/><rect x="38.79" y="26.67" width="1.41" height="1.41"/><rect x="1.21" y="27.88" width="1.41" height="1.41"/><rect x="3.64" y="27.88" width="1.41" height="1.41"/><rect x="7.27" y="27.88" width="1.41" height="1.41"/><rect x="8.48" y="27.88" width="1.41" height="1.41"/><rect x="9.70" y="27.88" width="1.41" height="1.41"/><rect x="13.33" y="27.88" width="1.41" height="1.41"/><rect x="14.55" y="27.88" width="1.41" height="1.41"/><rect x="18.18" y="27.88" width="1.41" height="1.41"/><rect x="19.39" y="27.88" width="1.41" height="1.41"/><rect x="21.82" y="27.88" width="1.41" height="1.41"/><rect x="23.03" y="27.88" width="1.41" height="1.41"/><rect x="24.24" y="27.88" width="1.41" height="1.41"/><rect x="29.09" y="27.88" width="1.41" height="1.41"/><rect x="30.30" y="27.88" width="1.41" height="1.41"/><rect x="31.52" y="27.88" width="1.41" height="1.41"/><rect x="35.15" y="27.88" width="1.41" height="1.41"/><rect x="36.36" y="27.88" width="1.41" height="1.41"/><rect x="37.58" y="27.88" width="1.41" height="1.41"/><rect x="0.00" y="29.09" width="1.41" height="1.41"/><rect x="1.21" y="29.09" width="1.41" height="1.41"/><rect x="4.85" y="29.09" width="1.41" height="1.41"/><rect x="6.06" y="29.09" width="1.41" height="1.41"/><rect x="7.27" y="29.09" width="1.41" height="1.41"/><rect x="8.48" y="29.09" width="1.41" height="1.41"/><rect x="10.91" y="29.09" width="1.41" height="1.41"/><rect x="15.76" y="29.09" width="1.41" height="1.41"/><rect x="18.18" y="29.09" width="1.41" height="1.41"/><rect x="20.61" y="29.09" width="1.41" height="1.41"/><rect x="21.82" y="29.09" width="1.41" height="1.41"/><rect x="24.24" y="29.09" width="1.41" height="1.41"/><rect x="26.67" y="29.09" width="1.41" height="1.41"/><rect x="27.88" y="29.09" width="1.41" height="1.41"/><rect x="29.09" y="29.09" width="1.41" height="1.41"/><rect x="30.30" y="29.09" width="1.41" height="1.41"/><rect x="33.94" y="29.09" width="1.41" height="1.41"/><rect x="35.15" y="29.09" width="1.41" height="1.41"/><rect x="36.36" y="29.09" width="1.41" height="1.41"/><rect x="38.79" y="29.09" width="1.41" height="1.41"/><rect x="0.00" y="30.30" width="1.41" height="1.41"/><rect x="1.21" y="30.30" width="1.41" height="1.41"/><rect x="2.42" y="30.30" width="1.41" height="1.41"/><rect x="9.70" y="30.30" width="1.41" height="1.41"/><rect x="10.91" y="30.30" width="1.41" height="1.41"/><rect x="14.55" y="30.30" width="1.41" height="1.41"/><rect x="16.97" y="30.30" width="1.41" height="1.41"/><rect x="18.18" y="30.30" width="1.41" height="1.41"/><rect x="19.39" y="30.30" width="1.41" height="1.41"/><rect x="20.61" y="30.30" width="1.41" height="1.41"/><rect x="21.82" y="30.30" width="1.41" height="1.41"/><rect x="23.03" y="30.30" width="1.41" height="1.41"/><rect x="24.24" y="30.30" width="1.41" height="1.41"/><rect x="26.67" y="30.30" width="1.41" height="1.41"/><rect x="29.09" y="30.30" width="1.41" height="1.41"/><rect x="30.30" y="30.30" width="1.41" height="1.41"/><rect x="33.94" y="30.30" width="1.41" height="1.41"/><rect x="35.15" y="30.30" width="1.41" height="1.41"/><rect x="36.36" y="30.30" width="1.41" height="1.41"/><rect x="37.58" y="30.30" width="1.41" height="1.41"/><rect x="0.00" y="31.52" width="1.41" height="1.41"/><rect x="1.21" y="31.52" width="1.41" height="1.41"/><rect x="2.42" y="31.52" width="1.41" height="1.41"/><rect x="3.64" y="31.52" width="1.41" height="1.41"/><rect x="4.85" y="31.52" width="1.41" height="1.41"/><rect x="6.06" y="31.52" width="1.41" height="1.41"/><rect x="7.27" y="31.52" width="1.41" height="1.41"/><rect x="8.48" y="31.52" width="1.41" height="1.41"/><rect x="9.70" y="31.52" width="1.41" height="1.41"/><rect x="12.12" y="31.52" width="1.41" height="1.41"/><rect x="13.33" y="31.52" width="1.41" height="1.41"/><rect x="16.97" y="31.52" width="1.41" height="1.41"/><rect x="18.18" y="31.52" width="1.41" height="1.41"/><rect x="19.39" y="31.52" width="1.41" height="1.41"/><rect x="21.82" y="31.52" width="1.41" height="1.41"/><rect x="25.45" y="31.52" width="1.41" height="1.41"/><rect x="26.67" y="31.52" width="1.41" height="1.41"/><rect x="30.30" y="31.52" width="1.41" height="1.41"/><rect x="32.73" y="31.52" width="1.41" height="1.41"/><rect x="33.94" y="31.52" width="1.41" height="1.41"/><rect x="35.15" y="31.52" width="1.41" height="1.41"/><rect x="0.00" y="32.73" width="1.41" height="1.41"/><rect x="7.27" y="32.73" width="1.41" height="1.41"/><rect x="9.70" y="32.73" width="1.41" height="1.41"/><rect x="10.91" y="32.73" width="1.41" height="1.41"/><rect x="12.12" y="32.73" width="1.41" height="1.41"/><rect x="15.76" y="32.73" width="1.41" height="1.41"/><rect x="16.97" y="32.73" width="1.41" height="1.41"/><rect x="18.18" y="32.73" width="1.41" height="1.41"/><rect x="19.39" y="32.73" width="1.41" height="1.41"/><rect x="21.82" y="32.73" width="1.41" height="1.41"/><rect x="29.09" y="32.73" width="1.41" height="1.41"/><rect x="30.30" y="32.73" width="1.41" height="1.41"/><rect x="31.52" y="32.73" width="1.41" height="1.41"/><rect x="33.94" y="32.73" width="1.41" height="1.41"/><rect x="35.15" y="32.73" width="1.41" height="1.41"/><rect x="37.58" y="32.73" width="1.41" height="1.41"/><rect x="38.79" y="32.73" width="1.41" height="1.41"/><rect x="0.00" y="33.94" width="1.41" height="1.41"/><rect x="2.42" y="33.94" width="1.41" height="1.41"/><rect x="3.64" y="33.94" width="1.41" height="1.41"/><rect x="4.85" y="33.94" width="1.41" height="1.41"/><rect x="7.27" y="33.94" width="1.41" height="1.41"/><rect x="8.48" y="33.94" width="1.41" height="1.41"/><rect x="10.91" y="33.94" width="1.41" height="1.41"/><rect x="15.76" y="33.94" width="1.41" height="1.41"/><rect x="16.97" y="33.94" width="1.41" height="1.41"/><rect x="18.18" y="33.94" width="1.41" height="1.41"/><rect x="19.39" y="33.94" width="1.41" height="1.41"/><rect x="21.82" y="33.94" width="1.41" height="1.41"/><rect x="23.03" y="33.94" width="1.41" height="1.41"/><rect x="24.24" y="33.94" width="1.41" height="1.41"/><rect x="31.52" y="33.94" width="1.41" height="1.41"/><rect x="33.94" y="33.94" width="1.41" height="1.41"/><rect x="36.36" y="33.94" width="1.41" height="1.41"/><rect x="38.79" y="33.94" width="1.41" height="1.41"/><rect x="0.00" y="35.15" width="1.41" height="1.41"/><rect x="2.42" y="35.15" width="1.41" height="1.41"/><rect x="3.64" y="35.15" width="1.41" height="1.41"/><rect x="4.85" y="35.15" width="1.41" height="1.41"/><rect x="7.27" y="35.15" width="1.41" height="1.41"/><rect x="8.48" y="35.15" width="1.41" height="1.41"/><rect x="9.70" y="35.15" width="1.41" height="1.41"/><rect x="10.91" y="35.15" width="1.41" height="1.41"/><rect x="14.55" y="35.15" width="1.41" height="1.41"/><rect x="15.76" y="35.15" width="1.41" height="1.41"/><rect x="19.39" y="35.15" width="1.41" height="1.41"/><rect x="24.24" y="35.15" width="1.41" height="1.41"/><rect x="25.45" y="35.15" width="1.41" height="1.41"/><rect x="30.30" y="35.15" width="1.41" height="1.41"/><rect x="31.52" y="35.15" width="1.41" height="1.41"/><rect x="32.73" y="35.15" width="1.41" height="1.41"/><rect x="33.94" y="35.15" width="1.41" height="1.41"/><rect x="38.79" y="35.15" width="1.41" height="1.41"/><rect x="0.00" y="36.36" width="1.41" height="1.41"/><rect x="2.42" y="36.36" width="1.41" height="1.41"/><rect x="3.64" y="36.36" width="1.41" height="1.41"/><rect x="4.85" y="36.36" width="1.41" height="1.41"/><rect x="7.27" y="36.36" width="1.41" height="1.41"/><rect x="9.70" y="36.36" width="1.41" height="1.41"/><rect x="10.91" y="36.36" width="1.41" height="1.41"/><rect x="14.55" y="36.36" width="1.41" height="1.41"/><rect x="18.18" y="36.36" width="1.41" height="1.41"/><rect x="19.39" y="36.36" width="1.41" height="1.41"/><rect x="20.61" y="36.36" width="1.41" height="1.41"/><rect x="21.82" y="36.36" width="1.41" height="1.41"/><rect x="23.03" y="36.36" width="1.41" height="1.41"/><rect x="26.67" y="36.36" width="1.41" height="1.41"/><rect x="27.88" y="36.36" width="1.41" height="1.41"/><rect x="29.09" y="36.36" width="1.41" height="1.41"/><rect x="31.52" y="36.36" width="1.41" height="1.41"/><rect x="32.73" y="36.36" width="1.41" height="1.41"/><rect x="33.94" y="36.36" width="1.41" height="1.41"/><rect x="37.58" y="36.36" width="1.41" height="1.41"/><rect x="38.79" y="36.36" width="1.41" height="1.41"/><rect x="0.00" y="37.58" width="1.41" height="1.41"/><rect x="7.27" y="37.58" width="1.41" height="1.41"/><rect x="8.48" y="37.58" width="1.41" height="1.41"/><rect x="12.12" y="37.58" width="1.41" height="1.41"/><rect x="13.33" y="37.58" width="1.41" height="1.41"/><rect x="15.76" y="37.58" width="1.41" height="1.41"/><rect x="16.97" y="37.58" width="1.41" height="1.41"/><rect x="18.18" y="37.58" width="1.41" height="1.41"/><rect x="20.61" y="37.58" width="1.41" height="1.41"/><rect x="23.03" y="37.58" width="1.41" height="1.41"/><rect x="24.24" y="37.58" width="1.41" height="1.41"/><rect x="27.88" y="37.58" width="1.41" height="1.41"/><rect x="29.09" y="37.58" width="1.41" height="1.41"/><rect x="31.52" y="37.58" width="1.41" height="1.41"/><rect x="32.73" y="37.58" width="1.41" height="1.41"/><rect x="35.15" y="37.58" width="1.41" height="1.41"/><rect x="37.58" y="37.58" width="1.41" height="1.41"/><rect x="0.00" y="38.79" width="1.41" height="1.41"/><rect x="1.21" y="38.79" width="1.41" height="1.41"/><rect x="2.42" y="38.79" width="1.41" height="1.41"/><rect x="3.64" y="38.79" width="1.41" height="1.41"/><rect x="4.85" y="38.79" width="1.41" height="1.41"/><rect x="6.06" y="38.79" width="1.41" height="1.41"/><rect x="7.27" y="38.79" width="1.41" height="1.41"/><rect x="8.48" y="38.79" width="1.41" height="1.41"/><rect x="9.70" y="38.79" width="1.41" height="1.41"/><rect x="10.91" y="38.79" width="1.41" height="1.41"/><rect x="15.76" y="38.79" width="1.41" height="1.41"/><rect x="18.18" y="38.79" width="1.41" height="1.41"/><rect x="20.61" y="38.79" width="1.41" height="1.41"/><rect x="21.82" y="38.79" width="1.41" height="1.41"/><rect x="25.45" y="38.79" width="1.41" height="1.41"/><rect x="26.67" y="38.79" width="1.41" height="1.41"/><rect x="30.30" y="38.79" width="1.41" height="1.41"/><rect x="31.52" y="38.79" width="1.41" height="1.41"/><rect x="35.15" y="38.79" width="1.41" height="1.41"/><rect x="36.36" y="38.79" width="1.41" height="1.41"/><rect x="38.79" y="38.79" width="1.41" height="1.41"/></g><rect x="14" y="14" width="12" height="12" fill="#fff"/><path d="M16 24v-6l2.5 2.5L20 17l1.5 3.5L24 18v6z" fill="#f2b820"/></svg></div>
  <svg class="a" style="left:1399px;top:35px" width="8" height="5" viewBox="0 0 8 5"><path d="M0 0h8L4 5z" fill="#606266"/></svg>
</div>

<div id="tags">
  <div class="tab" style="left:15px;width:42px;padding:0;text-align:center">首页</div>
  <div class="tab act" style="left:62px;width:98px;padding:0 0 0 9px"><span class="a" style="left:8px;top:10px;width:8px;height:8px;border-radius:50%;background:#fff"></span><span class="a" style="left:21px;top:1px">登录日志</span><span class="a" style="left:78px;top:1px;font-size:10px;color:#e6f1ff">×</span></div>
</div>

<div class="lbl" style="left:220px">登录地址</div>
<div class="inp" style="left:288px"><span class="ph">请输入登录地址</span></div>
<div class="lbl" style="left:538px">用户名称</div>
<div class="inp" style="left:606px"><span class="ph">请输入用户名称</span></div>
<div class="lbl" style="left:884px">状态</div>
<div class="inp" style="left:924px;border-color:#409eff"><span class="ph">结果</span><svg class="a" style="left:217px;top:12px" width="10" height="6" viewBox="0 0 10 6"><path d="M0.5 5.5L5 1l4.5 4.5" stroke="#c0c4cc" stroke-width="1.2" fill="none"/></svg></div>
<div class="lbl" style="left:1174px">登录时间</div>
<div class="inp" style="left:1242px"><svg class="a" style="left:11px;top:9px" width="13" height="12" viewBox="0 0 13 12"><rect x="0.6" y="1.2" width="11.8" height="10.2" stroke="#c0c4cc" stroke-width="1.1" fill="none"/><path d="M0.6 3.8h11.8M3.5 0v2M9.5 0v2" stroke="#c0c4cc" stroke-width="1.1"/><path d="M3 6h1M6 6h1M9 6h1M3 8.5h1M6 8.5h1M9 8.5h1" stroke="#c0c4cc" stroke-width="1"/></svg><span class="ph" style="left:42px">开始日期</span><span class="a" style="left:114px;top:0;color:#303133">-</span><span class="ph" style="left:140px">结束日期</span></div>

<!-- dropdown -->
<div class="a" style="left:924px;top:183px;width:240px;height:82px;border:1px solid #e4e7ed;border-radius:4px;background:#fff;box-shadow:0 2px 12px 0 rgba(0,0,0,.1)"></div>
<svg class="a" style="left:958px;top:177px" width="16" height="8" viewBox="0 0 16 8"><path d="M0 7.5L8 0.5 16 7.5" fill="#fff" stroke="#e4e7ed" stroke-width="1"/><rect x="0" y="7" width="16" height="2" fill="#fff"/></svg>
<div class="a" style="left:925px;top:190px;width:238px;height:34px;background:#f5f7fa"></div>
<div class="a" style="left:945px;top:190px;height:34px;line-height:34px;font-size:14px;color:#606266">成功</div>
<div class="a" style="left:945px;top:224px;height:34px;line-height:34px;font-size:14px;color:#606266">失败</div>

<div class="btn" style="left:220px;top:189px;height:33px;line-height:32px;background:#1890ff;border:1px solid #1890ff;color:#fff"><svg class="a" style="left:16px;top:10px" width="12" height="12" viewBox="0 0 12 12"><circle cx="5.2" cy="5.2" r="4.3" stroke="#fff" stroke-width="1.2" fill="none"/><path d="M8.3 8.3L11 11" stroke="#fff" stroke-width="1.2"/></svg><span class="a" style="left:33px;top:0">搜索</span></div>
<div class="btn" style="left:303px;top:189px;height:33px;line-height:32px;background:#fff;border:1px solid #dcdfe6;color:#606266"><svg class="a" style="left:16px;top:10px" width="11" height="11" viewBox="0 0 11 11"><path d="M1.5 4.5A4 4 0 0 1 9 3M9.5 6.5A4 4 0 0 1 2 8" stroke="#606266" stroke-width="1.1" fill="none"/><path d="M9.5 0.8v3h-3M1.5 10.2v-3h3" stroke="#606266" stroke-width="1.1" fill="none"/></svg><span class="a" style="left:33px;top:0">重置</span></div>
<div class="btn" style="left:220px;top:240px;height:28.5px;line-height:28px;background:#ffba00;border:1px solid #ffba00;color:#fff"><svg class="a" style="left:16px;top:9px" width="11" height="11" viewBox="0 0 11 11"><path d="M5.5 0.5v6.8M2.5 4.5l3 3 3-3M1 10h9" stroke="#fff" stroke-width="1" fill="none"/></svg><span class="a" style="left:33px;top:0">导出</span></div>

<div class="a" style="left:1546px;top:240px;width:28px;height:28px;border-radius:50%;border:1px solid #dcdfe6;background:#fff"><svg class="a" style="left:8px;top:8px" width="12" height="12" viewBox="0 0 12 12"><circle cx="5.2" cy="5.2" r="4.3" stroke="#606266" stroke-width="1.1" fill="none"/><path d="M8.3 8.3L11 11" stroke="#606266" stroke-width="1.1"/></svg></div>
<div class="a" style="left:1584px;top:240px;width:28px;height:28px;border-radius:50%;border:1px solid #dcdfe6;background:#fff"><svg class="a" style="left:8px;top:8px" width="11" height="11" viewBox="0 0 11 11"><path d="M1.5 4.5A4 4 0 0 1 9 3M9.5 6.5A4 4 0 0 1 2 8" stroke="#606266" stroke-width="1.1" fill="none"/><path d="M9.5 0.8v3h-3M1.5 10.2v-3h3" stroke="#606266" stroke-width="1.1" fill="none"/></svg></div>

<div class="thead"></div>
<div class="th" style="left:220px;width:187px">访问编号</div>
<div class="th" style="left:407px;width:120px">日志类型</div>
<div class="th" style="left:527px;width:185px">用户名称</div>
<div class="th" style="left:712px;width:129px">登录地址</div>
<div class="th" style="left:841px;width:400px">userAgent</div>
<div class="th" style="left:1241px;width:186px">结果</div>
<div class="th" style="left:1427px;width:180px">登录日期</div>
<div class="rowline" style="top:369px"></div>
<div class="td num" style="left:220px;width:187px;top:320px"><span style="letter-spacing:-0.98px">1</span><span style="letter-spacing:0.82px">0768</span></div>
<div class="tag tp" style="left:432px;top:330px;width:70px">账号登录</div>
<div class="td" style="left:527px;width:185px;top:320px">admin</div>
<div class="td ip" style="left:712px;width:129px;top:320px"><span style="letter-spacing:-0.98px">1</span><span style="letter-spacing:0.82px">0</span><span style="letter-spacing:-0.98px">1</span>.<span style="letter-spacing:0.82px">224</span>.<span style="letter-spacing:-0.98px">1</span><span style="letter-spacing:0.82px">55</span>.<span style="letter-spacing:0.82px">45</span></div>
<div class="td ua" style="left:841px;width:400px;top:320px;letter-spacing:0px">Mozilla/5.0 (Macintosh; Intel Mac OS X 10_14_6) AppleWe...</div>
<div class="tag ts" style="left:1311px;top:330px;width:46px">成功</div>
<div class="td dt" style="left:1427px;width:180px;top:320px"><span style="letter-spacing:0.82px">2022</span><span style="letter-spacing:1.2px">-</span><span style="letter-spacing:0.82px">03</span><span style="letter-spacing:1.2px">-</span><span style="letter-spacing:0.82px">28</span> <span style="letter-spacing:0.82px">23</span><span style="letter-spacing:0.5px">:</span><span style="letter-spacing:-0.98px">1</span><span style="letter-spacing:0.82px">4</span><span style="letter-spacing:0.5px">:</span><span style="letter-spacing:-0.98px">1</span><span style="letter-spacing:0.82px">7</span></div>
<div class="rowline" style="top:418px"></div>
<div class="td num" style="left:220px;width:187px;top:369px"><span style="letter-spacing:-0.98px">1</span><span style="letter-spacing:0.82px">0767</span></div>
<div class="tag tp" style="left:432px;top:379px;width:70px">账号登录</div>
<div class="td" style="left:527px;width:185px;top:369px">admin</div>
<div class="td ip" style="left:712px;width:129px;top:369px"><span style="letter-spacing:-0.98px">1</span><span style="letter-spacing:0.82px">0</span><span style="letter-spacing:-0.98px">1</span>.<span style="letter-spacing:0.82px">224</span>.<span style="letter-spacing:-0.98px">1</span><span style="letter-spacing:0.82px">55</span>.<span style="letter-spacing:0.82px">45</span></div>
<div class="td ua" style="left:841px;width:400px;top:369px;letter-spacing:0px">Mozilla/5.0 (Macintosh; Intel Mac OS X 10_14_6) AppleWe...</div>
<div class="tag ti" style="left:1287px;top:379px;width:94px">验证码不正确</div>
<div class="td dt" style="left:1427px;width:180px;top:369px"><span style="letter-spacing:0.82px">2022</span><span style="letter-spacing:1.2px">-</span><span style="letter-spacing:0.82px">03</span><span style="letter-spacing:1.2px">-</span><span style="letter-spacing:0.82px">28</span> <span style="letter-spacing:0.82px">23</span><span style="letter-spacing:0.5px">:</span><span style="letter-spacing:-0.98px">1</span><span style="letter-spacing:0.82px">4</span><span style="letter-spacing:0.5px">:</span><span style="letter-spacing:0.82px">09</span></div>
<div class="rowline" style="top:467px"></div>
<div class="td num" style="left:220px;width:187px;top:418px"><span style="letter-spacing:-0.98px">1</span><span style="letter-spacing:0.82px">0766</span></div>
<div class="tag ti" style="left:432px;top:428px;width:70px">超时登出</div>
<div class="td" style="left:527px;width:185px;top:418px">admin</div>
<div class="td ip" style="left:712px;width:129px;top:418px"><span style="letter-spacing:-0.98px">1</span><span style="letter-spacing:0.82px">20</span>.<span style="letter-spacing:0.82px">229</span>.<span style="letter-spacing:0.82px">36</span>.<span style="letter-spacing:0.82px">208</span></div>
<div class="td ua" style="left:841px;width:400px;top:418px;letter-spacing:0px">Mozilla/5.0 (Macintosh; Intel Mac OS X 10_15_7) AppleWe...</div>
<div class="tag ts" style="left:1311px;top:428px;width:46px">成功</div>
<div class="td dt" style="left:1427px;width:180px;top:418px"><span style="letter-spacing:0.82px">2022</span><span style="letter-spacing:1.2px">-</span><span style="letter-spacing:0.82px">03</span><span style="letter-spacing:1.2px">-</span><span style="letter-spacing:0.82px">28</span> <span style="letter-spacing:0.82px">23</span><span style="letter-spacing:0.5px">:</span><span style="letter-spacing:-0.98px">1</span><span style="letter-spacing:0.82px">0</span><span style="letter-spacing:0.5px">:</span><span style="letter-spacing:0.82px">00</span></div>
<div class="rowline" style="top:516px"></div>
<div class="td num" style="left:220px;width:187px;top:467px"><span style="letter-spacing:-0.98px">1</span><span style="letter-spacing:0.82px">0765</span></div>
<div class="tag ti" style="left:432px;top:477px;width:70px">超时登出</div>
<div class="td" style="left:527px;width:185px;top:467px">admin</div>
<div class="td ip" style="left:712px;width:129px;top:467px"><span style="letter-spacing:-0.98px">11</span><span style="letter-spacing:0.82px">6</span>.<span style="letter-spacing:0.82px">253</span>.<span style="letter-spacing:-0.98px">1</span><span style="letter-spacing:0.82px">57</span>.<span style="letter-spacing:-0.98px">1</span><span style="letter-spacing:0.82px">9</span><span style="letter-spacing:-0.98px">1</span></div>
<div class="td ua" style="left:841px;width:400px;top:467px;letter-spacing:-0.14px">Mozilla/5.0 (iPhone; CPU iPhone OS 14_8_1 like Mac OS X...</div>
<div class="tag ts" style="left:1311px;top:477px;width:46px">成功</div>
<div class="td dt" style="left:1427px;width:180px;top:467px"><span style="letter-spacing:0.82px">2022</span><span style="letter-spacing:1.2px">-</span><span style="letter-spacing:0.82px">03</span><span style="letter-spacing:1.2px">-</span><span style="letter-spacing:0.82px">28</span> <span style="letter-spacing:0.82px">23</span><span style="letter-spacing:0.5px">:</span><span style="letter-spacing:0.82px">09</span><span style="letter-spacing:0.5px">:</span><span style="letter-spacing:0.82px">00</span></div>
<div class="rowline" style="top:565px"></div>
<div class="td num" style="left:220px;width:187px;top:516px"><span style="letter-spacing:-0.98px">1</span><span style="letter-spacing:0.82px">0764</span></div>
<div class="tag tp" style="left:432px;top:526px;width:70px">账号登录</div>
<div class="td" style="left:527px;width:185px;top:516px">admin</div>
<div class="td ip" style="left:712px;width:129px;top:516px"><span style="letter-spacing:0.82px">39</span>.<span style="letter-spacing:0.82px">69</span>.<span style="letter-spacing:0.82px">33</span>.<span style="letter-spacing:0.82px">204</span></div>
<div class="td ua" style="left:841px;width:400px;top:516px;letter-spacing:0.19px">Mozilla/5.0 (Windows NT 10.0; WOW64) AppleWebKit/53...</div>
<div class="tag ts" style="left:1311px;top:526px;width:46px">成功</div>
<div class="td dt" style="left:1427px;width:180px;top:516px"><span style="letter-spacing:0.82px">2022</span><span style="letter-spacing:1.2px">-</span><span style="letter-spacing:0.82px">03</span><span style="letter-spacing:1.2px">-</span><span style="letter-spacing:0.82px">28</span> <span style="letter-spacing:0.82px">23</span><span style="letter-spacing:0.5px">:</span><span style="letter-spacing:0.82px">08</span><span style="letter-spacing:0.5px">:</span><span style="letter-spacing:-0.98px">1</span><span style="letter-spacing:0.82px">8</span></div>
<div class="rowline" style="top:614px"></div>
<div class="td num" style="left:220px;width:187px;top:565px"><span style="letter-spacing:-0.98px">1</span><span style="letter-spacing:0.82px">0763</span></div>
<div class="tag tp" style="left:432px;top:575px;width:70px">账号登录</div>
<div class="td" style="left:527px;width:185px;top:565px">admin</div>
<div class="td ip" style="left:712px;width:129px;top:565px"><span style="letter-spacing:0.82px">39</span>.<span style="letter-spacing:0.82px">69</span>.<span style="letter-spacing:0.82px">33</span>.<span style="letter-spacing:0.82px">204</span></div>
<div class="td ua" style="left:841px;width:400px;top:565px;letter-spacing:0.19px">Mozilla/5.0 (Windows NT 10.0; WOW64) AppleWebKit/53...</div>
<div class="tag ti" style="left:1287px;top:575px;width:94px">验证码不正确</div>
<div class="td dt" style="left:1427px;width:180px;top:565px"><span style="letter-spacing:0.82px">2022</span><span style="letter-spacing:1.2px">-</span><span style="letter-spacing:0.82px">03</span><span style="letter-spacing:1.2px">-</span><span style="letter-spacing:0.82px">28</span> <span style="letter-spacing:0.82px">23</span><span style="letter-spacing:0.5px">:</span><span style="letter-spacing:0.82px">08</span><span style="letter-spacing:0.5px">:</span><span style="letter-spacing:-0.98px">11</span></div>
<div class="rowline" style="top:663px"></div>
<div class="td num" style="left:220px;width:187px;top:614px"><span style="letter-spacing:-0.98px">1</span><span style="letter-spacing:0.82px">0762</span></div>
<div class="tag ti" style="left:432px;top:624px;width:70px">超时登出</div>
<div class="td" style="left:527px;width:185px;top:614px">admin</div>
<div class="td ip" style="left:712px;width:129px;top:614px"><span style="letter-spacing:0.82px">222</span>.<span style="letter-spacing:0.82px">85</span>.<span style="letter-spacing:0.82px">239</span>.<span style="letter-spacing:0.82px">2</span><span style="letter-spacing:-0.98px">1</span><span style="letter-spacing:0.82px">9</span></div>
<div class="td ua" style="left:841px;width:400px;top:614px;letter-spacing:0px">Mozilla/5.0 (Macintosh; Intel Mac OS X 10_15_7) AppleWe...</div>
<div class="tag ts" style="left:1311px;top:624px;width:46px">成功</div>
<div class="td dt" style="left:1427px;width:180px;top:614px"><span style="letter-spacing:0.82px">2022</span><span style="letter-spacing:1.2px">-</span><span style="letter-spacing:0.82px">03</span><span style="letter-spacing:1.2px">-</span><span style="letter-spacing:0.82px">28</span> <span style="letter-spacing:0.82px">23</span><span style="letter-spacing:0.5px">:</span><span style="letter-spacing:0.82px">07</span><span style="letter-spacing:0.5px">:</span><span style="letter-spacing:0.82px">00</span></div>
<div class="rowline" style="top:712px"></div>
<div class="td num" style="left:220px;width:187px;top:663px"><span style="letter-spacing:-0.98px">1</span><span style="letter-spacing:0.82px">076</span><span style="letter-spacing:-0.98px">1</span></div>
<div class="tag ti" style="left:432px;top:673px;width:70px">超时登出</div>
<div class="td" style="left:527px;width:185px;top:663px">admin</div>
<div class="td ip" style="left:712px;width:129px;top:663px"><span style="letter-spacing:0.82px">39</span>.<span style="letter-spacing:0.82px">69</span>.<span style="letter-spacing:0.82px">33</span>.<span style="letter-spacing:0.82px">204</span></div>
<div class="td ua" style="left:841px;width:400px;top:663px;letter-spacing:0.19px">Mozilla/5.0 (Windows NT 10.0; WOW64) AppleWebKit/53...</div>
<div class="tag ts" style="left:1311px;top:673px;width:46px">成功</div>
<div class="td dt" style="left:1427px;width:180px;top:663px"><span style="letter-spacing:0.82px">2022</span><span style="letter-spacing:1.2px">-</span><span style="letter-spacing:0.82px">03</span><span style="letter-spacing:1.2px">-</span><span style="letter-spacing:0.82px">28</span> <span style="letter-spacing:0.82px">23</span><span style="letter-spacing:0.5px">:</span><span style="letter-spacing:0.82px">06</span><span style="letter-spacing:0.5px">:</span><span style="letter-spacing:0.82px">00</span></div>
<div class="rowline" style="top:761px"></div>
<div class="td num" style="left:220px;width:187px;top:712px"><span style="letter-spacing:-0.98px">1</span><span style="letter-spacing:0.82px">0760</span></div>
<div class="tag ti" style="left:432px;top:722px;width:70px">超时登出</div>
<div class="td" style="left:527px;width:185px;top:712px">admin</div>
<div class="td ip" style="left:712px;width:129px;top:712px"><span style="letter-spacing:-0.98px">11</span><span style="letter-spacing:0.82px">5</span>.<span style="letter-spacing:0.82px">200</span>.<span style="letter-spacing:0.82px">23</span><span style="letter-spacing:-0.98px">1</span>.<span style="letter-spacing:-0.98px">1</span><span style="letter-spacing:0.82px">09</span></div>
<div class="td ua" style="left:841px;width:400px;top:712px;letter-spacing:0.18px">Mozilla/5.0 (Windows NT 10.0; Win64; x64) AppleWebKit/...</div>
<div class="tag ts" style="left:1311px;top:722px;width:46px">成功</div>
<div class="td dt" style="left:1427px;width:180px;top:712px"><span style="letter-spacing:0.82px">2022</span><span style="letter-spacing:1.2px">-</span><span style="letter-spacing:0.82px">03</span><span style="letter-spacing:1.2px">-</span><span style="letter-spacing:0.82px">28</span> <span style="letter-spacing:0.82px">23</span><span style="letter-spacing:0.5px">:</span><span style="letter-spacing:0.82px">05</span><span style="letter-spacing:0.5px">:</span><span style="letter-spacing:0.82px">00</span></div>
<div class="rowline" style="top:809px"></div>
<div class="td num" style="left:220px;width:187px;top:761px"><span style="letter-spacing:-0.98px">1</span><span style="letter-spacing:0.82px">0759</span></div>
<div class="tag tp" style="left:432px;top:771px;width:70px">账号登录</div>
<div class="td" style="left:527px;width:185px;top:761px">admin</div>
<div class="td ip" style="left:712px;width:129px;top:761px"><span style="letter-spacing:-0.98px">1</span><span style="letter-spacing:0.82px">22</span>.<span style="letter-spacing:0.82px">235</span>.<span style="letter-spacing:0.82px">86</span>.<span style="letter-spacing:-0.98px">1</span><span style="letter-spacing:0.82px">3</span><span style="letter-spacing:-0.98px">1</span></div>
<div class="td ua" style="left:841px;width:400px;top:761px;letter-spacing:0px">Mozilla/5.0 (Macintosh; Intel Mac OS X 10_15_7) AppleWe...</div>
<div class="tag ts" style="left:1311px;top:771px;width:46px">成功</div>
<div class="td dt" style="left:1427px;width:180px;top:761px"><span style="letter-spacing:0.82px">2022</span><span style="letter-spacing:1.2px">-</span><span style="letter-spacing:0.82px">03</span><span style="letter-spacing:1.2px">-</span><span style="letter-spacing:0.82px">28</span> <span style="letter-spacing:0.82px">23</span><span style="letter-spacing:0.5px">:</span><span style="letter-spacing:0.82px">0</span><span style="letter-spacing:-0.98px">1</span><span style="letter-spacing:0.5px">:</span><span style="letter-spacing:0.82px">08</span></div>

<div class="redbox" style="left:874px;top:130px;width:299px;height:143px"></div>
<div class="redbox" style="left:418px;top:275px;width:96px;height:533px"></div>
<div class="redbox" style="left:1281px;top:274px;width:110px;height:541px"></div>
<div class="redbox" style="left:49px;top:710px;width:109px;height:43px"></div>
<div class="a" style="left:0;top:0;width:1px;height:815px;background:rgba(255,255,255,.22);z-index:9"></div>
<div class="a" style="left:1px;top:0;width:1px;height:815px;background:rgba(255,255,255,.07);z-index:9"></div>
<div class="a" style="left:1582px;top:35px;width:38px;height:780px;background:linear-gradient(90deg,rgba(0,0,20,0) 0%,rgba(0,0,20,.075) 89%,rgba(0,0,20,.095) 90%,rgba(0,0,20,.1) 100%);pointer-events:none;z-index:3"></div>

</div></body></html>
